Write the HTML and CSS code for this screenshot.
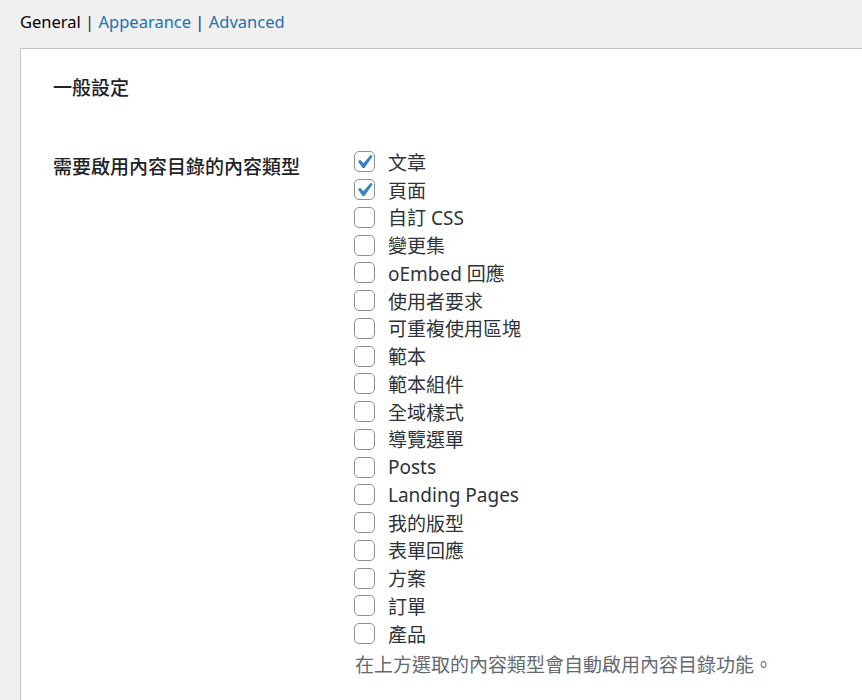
FILE: index.html
```html
<!DOCTYPE html>
<html lang="zh-Hant">
<head>
<meta charset="utf-8">
<title>Settings</title>
<link rel="stylesheet" href="styles.css">
</head>
<body>
<nav class="tabs">
  <span class="tab current">General</span><span class="sep"> | </span><a class="tab" href="#">Appearance</a><span class="sep"> | </span><a class="tab" href="#">Advanced</a>
</nav>
<div class="panel">
  <h2 class="section-title">一般設定</h2>
  <div class="form-row">
    <div class="form-label">需要啟用內容目錄的內容類型</div>
    <div class="form-field">
      <label class="opt"><span class="cb checked"><svg viewBox="0 0 20 20"><path d="M14.83 4.89l1.34.94-5.81 8.38H9.02L5.78 9.670l1.34-1.25 2.57 2.4z"/></svg></span><span>文章</span></label>
      <label class="opt"><span class="cb checked"><svg viewBox="0 0 20 20"><path d="M14.83 4.89l1.34.94-5.81 8.38H9.02L5.78 9.67l1.34-1.25 2.57 2.4z"/></svg></span><span>頁面</span></label>
      <label class="opt"><span class="cb"></span><span>自訂 CSS</span></label>
      <label class="opt"><span class="cb"></span><span>變更集</span></label>
      <label class="opt"><span class="cb"></span><span>oEmbed 回應</span></label>
      <label class="opt"><span class="cb"></span><span>使用者要求</span></label>
      <label class="opt"><span class="cb"></span><span>可重複使用區塊</span></label>
      <label class="opt"><span class="cb"></span><span>範本</span></label>
      <label class="opt"><span class="cb"></span><span>範本組件</span></label>
      <label class="opt"><span class="cb"></span><span>全域樣式</span></label>
      <label class="opt"><span class="cb"></span><span>導覽選單</span></label>
      <label class="opt"><span class="cb"></span><span>Posts</span></label>
      <label class="opt"><span class="cb"></span><span>Landing Pages</span></label>
      <label class="opt"><span class="cb"></span><span>我的版型</span></label>
      <label class="opt"><span class="cb"></span><span>表單回應</span></label>
      <label class="opt"><span class="cb"></span><span>方案</span></label>
      <label class="opt"><span class="cb"></span><span>訂單</span></label>
      <label class="opt"><span class="cb"></span><span>產品</span></label>
      <p class="desc">在上方選取的內容類型會自動啟用內容目錄功能。</p>
    </div>
  </div>
</div>
</body>
</html>
```
FILE: styles.css
```css
html, body {
  margin: 0;
  padding: 0;
}
body {
  background: #f0f0f1;
  font-family: "Noto Sans", "Noto Sans CJK TC", sans-serif;
  color: #1d2327;
  font-size: 19px;
  height: 700px;
  overflow: hidden;
}
.tabs {
  padding: 9px 0 0 20px;
  height: 39px;
  box-sizing: border-box;
  line-height: 26px;
  font-size: 16.5px;
  white-space: nowrap;
}
.tab {
  color: #2271b1;
  text-decoration: none;
}
.tab.current {
  color: #000;
}
.sep {
  color: #2c3338;
}
.panel {
  margin: 9px 0 0 20px;
  background: #fff;
  border-top: 1px solid #c3c4c7;
  border-left: 1px solid #c3c4c7;
  padding: 26px 0 0 32px;
  height: 700px;
}
.section-title {
  margin: 0;
  font-size: 19px;
  font-weight: 500;
  line-height: 26px;
}
.form-row {
  display: flex;
  margin-top: 47px;
}
.form-label {
  width: 301px;
  flex: none;
  font-weight: 500;
  line-height: 26px;
  padding-top: 6px;
}
.form-field {
  display: flex;
  flex-direction: column;
}
.opt {
  display: flex;
  align-items: center;
  height: 27.76px;
  color: #2c3338;
  font-size: 19px;
}
.cb {
  position: relative;
  width: 21px;
  height: 21px;
  box-sizing: border-box;
  border: 1px solid #8c8f94;
  border-radius: 5px;
  background: #fff;
  margin-right: 13px;
  flex: none;
}
.cb svg {
  position: absolute;
  left: -5px;
  top: -4px;
  width: 28px;
  height: 28px;
  fill: #3582c4;
}
.desc {
  margin: 4px 0 0 1px;
  line-height: 26px;
  color: #646970;
  font-size: 19px;
}
```
